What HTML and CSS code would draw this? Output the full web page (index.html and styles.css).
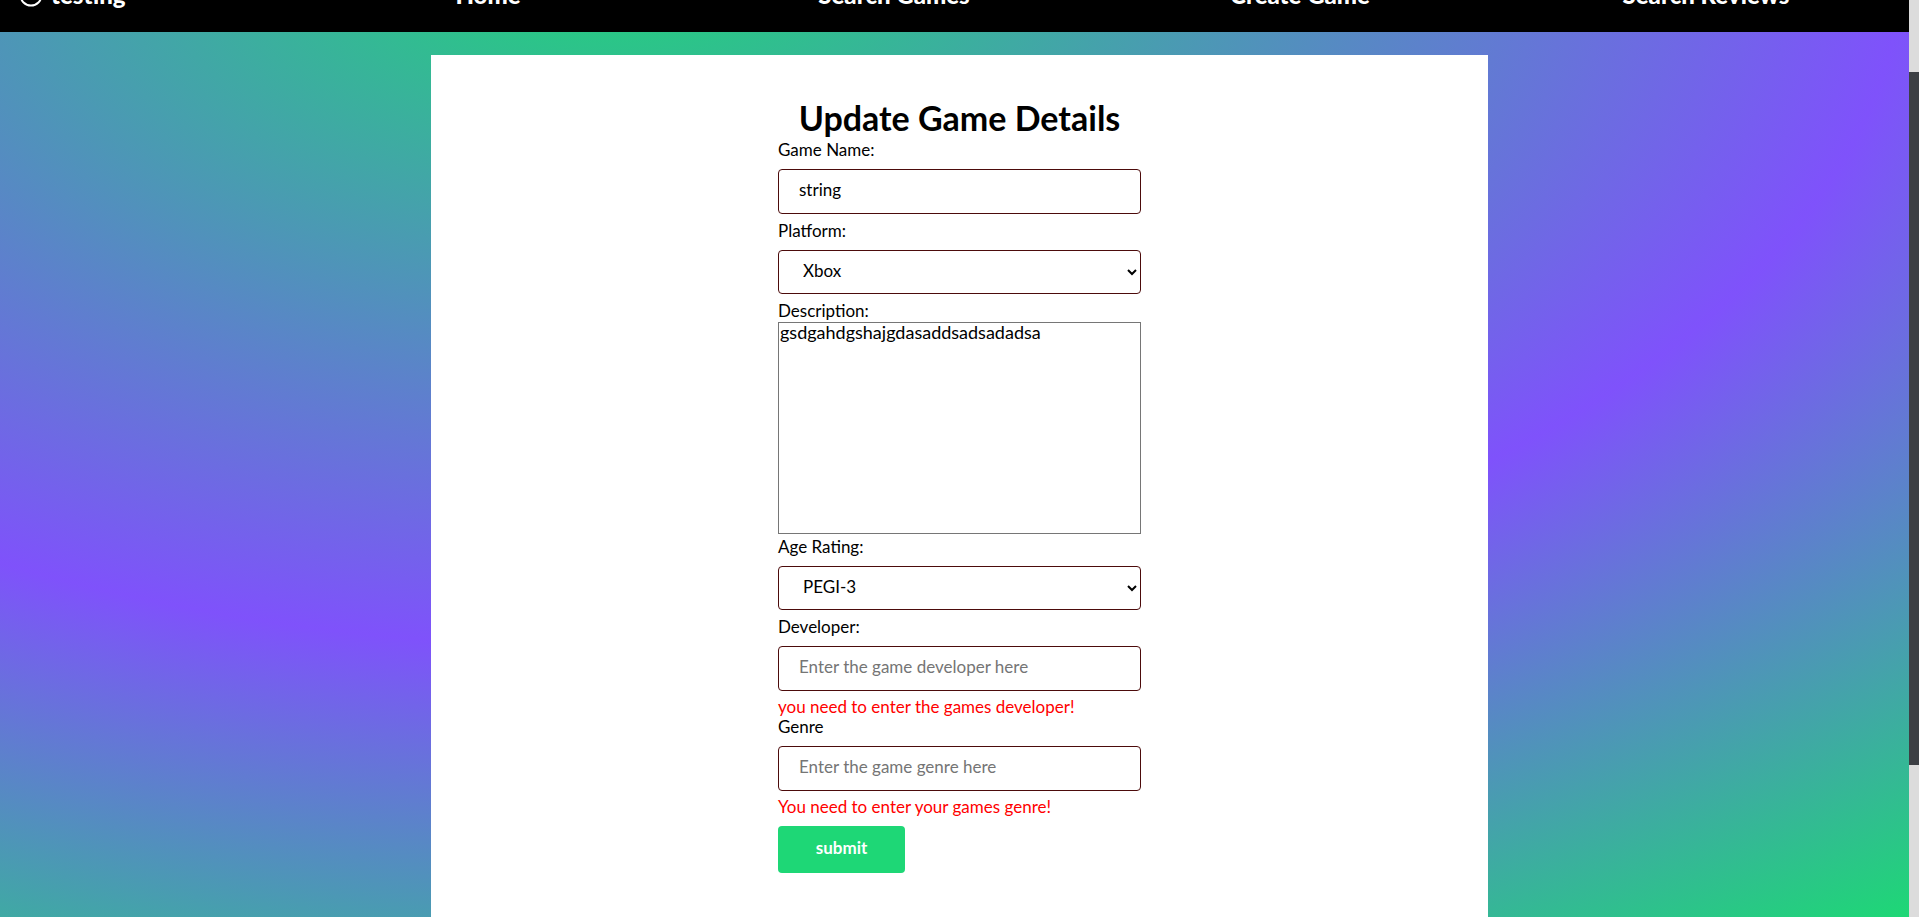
FILE: index.html
```html
<!DOCTYPE html>
<html lang="en">
<head>
<meta charset="utf-8">
<title>Update Game Details</title>
<link rel="stylesheet" href="styles.css">
</head>
<body>
<div class="page">
  <header class="navbar">
    <a class="brand" href="#">
      <svg class="brand-icon" viewBox="0 0 24 24" aria-hidden="true"><circle cx="12" cy="12" r="10.5" fill="none" stroke="#fff" stroke-width="2"/></svg>
      <span>testing</span>
    </a>
    <nav class="links">
      <a href="#">Home</a>
      <a href="#">Search Games</a>
      <a href="#">Create Game</a>
      <a href="#">Search Reviews</a>
    </nav>
  </header>
  <main class="panel">
    <form class="form">
      <h1 class="title">Update Game Details</h1>
      <label class="label" for="name">Game Name:</label>
      <input class="field" id="name" type="text" value="string">
      <label class="label" for="platform">Platform:</label>
      <select class="field choice" id="platform"><option>Xbox</option></select>
      <label class="label" for="description">Description:</label>
      <textarea class="description" id="description" spellcheck="false">gsdgahdgshajgdasaddsadsadadsa</textarea>
      <label class="label" for="rating">Age Rating:</label>
      <select class="field choice" id="rating"><option>PEGI-3</option></select>
      <label class="label" for="developer">Developer:</label>
      <input class="field" id="developer" type="text" placeholder="Enter the game developer here">
      <p class="error">you need to enter the games developer!</p>
      <label class="label" for="genre">Genre</label>
      <input class="field" id="genre" type="text" placeholder="Enter the game genre here">
      <p class="error">You need to enter your games genre!</p>
      <button class="submit" type="submit">submit</button>
    </form>
  </main>
</div>
<div class="scrollbar"><div class="thumb"></div></div>
</body>
</html>
```

FILE: styles.css
```css
* { box-sizing: border-box; }

body {
  margin: 0;
  height: 100vh;
  overflow: hidden;
  font-family: Lato, "Open Sans", sans-serif;
  color: #000;
}

.page {
  height: 100%;
  display: flex;
  flex-direction: column;
  overflow: hidden;
  background: radial-gradient(116% 132% at 32% -6%, #1ed776, #7f52fb 58%, #1ed776 99%);
}

.navbar {
  flex: none;
  display: flex;
  margin-top: -48px;
  padding: 27px 10px 21px 0;
  background: #000;
  font-size: 24px;
  font-weight: 900;
  line-height: 32px;
}

.navbar a { color: #fff; text-decoration: none; }

.brand {
  width: 285px;
  display: flex;
  align-items: center;
  gap: 8px;
  padding-left: 19px;
}

.brand-icon { width: 24px; height: 24px; }

.links { flex: 1; display: flex; }

.links a { flex: 1; text-align: center; }

.panel {
  flex: 1 0 auto;
  width: 1057px;
  max-width: 100%;
  align-self: center;
  margin-top: 23px;
  padding: 42px 24px;
  background: #fff;
}

.form {
  width: 363px;
  max-width: 100%;
  margin: 0 auto;
  display: flex;
  flex-direction: column;
  font-size: 17px;
}

.title {
  margin: 0 0 2px;
  font-size: 34px;
  line-height: 42px;
  text-align: center;
}

.label { padding-bottom: 2px; line-height: 18px; }

.field {
  width: 100%;
  height: 45px;
  margin: 8px 0;
  padding: 10px 20px 14px;
  border: 1px solid #4c0b0b;
  border-radius: 4px;
  background: #fff;
  font: inherit;
  line-height: 20px;
  color: #000;
}

.field::placeholder { color: #757575; }

.choice { height: 44px; padding: 8px 0 12px 20px; }

.description {
  height: 212px;
  margin-bottom: 4px;
  padding: 0 1px;
  border: 1px solid #767676;
  border-radius: 0;
  resize: none;
  font: inherit;
  font-size: 18px;
  line-height: 18px;
  color: #000;
}

.error { margin: 0; padding-bottom: 3px; line-height: 16px; color: #f00; }

.submit {
  align-self: flex-start;
  width: 127px;
  height: 47px;
  margin: 8px 0;
  padding: 0 0 4px;
  border: 0;
  border-radius: 4px;
  background: #1ed776;
  color: #fff;
  font: inherit;
  font-weight: 700;
}

.scrollbar {
  position: absolute;
  top: 0;
  right: 0;
  width: 10px;
  height: 100%;
  padding-top: 72px;
  background: #dcdcdc;
}

.thumb { height: 82%; background: #3c3f44; }
```
